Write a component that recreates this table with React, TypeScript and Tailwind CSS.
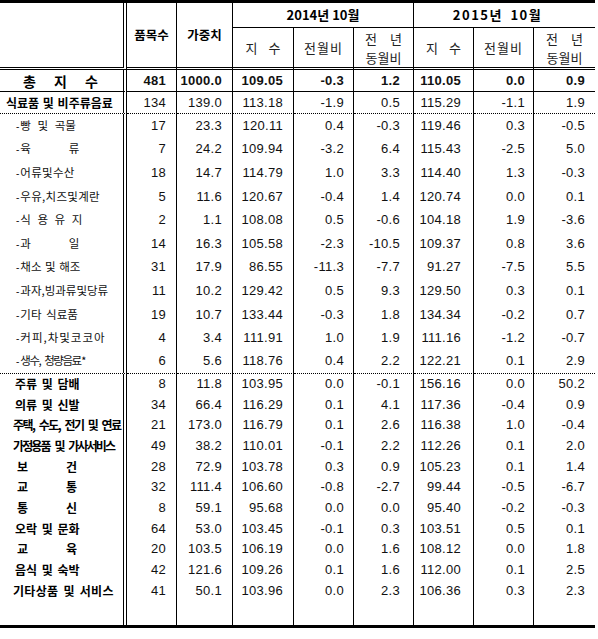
import React from "react";

type LabelDef = {
  kind: "total" | "cat" | "food" | "main";
  text: string;
  spread?: number;
  cls?: string;
  star?: boolean;
};

type RowDef = { label: LabelDef; v: string[] };

const rows: RowDef[] = [
  { label: { kind: "total", text: "총지수", spread: 75 }, v: ["481", "1000.0", "109.05", "-0.3", "1.2", "110.05", "0.0", "0.9"] },
  { label: { kind: "cat", text: "식료품 및 비주류음료" }, v: ["134", "139.0", "113.18", "-1.9", "0.5", "115.29", "-1.1", "1.9"] },
  { label: { kind: "food", text: "빵 및 곡물", cls: "[word-spacing:4px]" }, v: ["17", "23.3", "120.11", "0.4", "-0.3", "119.46", "0.3", "-0.5"] },
  { label: { kind: "food", text: "육류", spread: 59 }, v: ["7", "24.2", "109.94", "-3.2", "6.4", "115.43", "-2.5", "5.0"] },
  { label: { kind: "food", text: "어류및수산", cls: "tracking-[0.3px]" }, v: ["18", "14.7", "114.79", "1.0", "3.3", "114.40", "1.3", "-0.3"] },
  { label: { kind: "food", text: "우유,치즈및계란", cls: "tracking-[0.3px]" }, v: ["5", "11.6", "120.67", "-0.4", "1.4", "120.74", "0.0", "0.1"] },
  { label: { kind: "food", text: "식용유지", spread: 62 }, v: ["2", "1.1", "108.08", "0.5", "-0.6", "104.18", "1.9", "-3.6"] },
  { label: { kind: "food", text: "과일", spread: 59 }, v: ["14", "16.3", "105.58", "-2.3", "-10.5", "109.37", "0.8", "3.6"] },
  { label: { kind: "food", text: "채소 및 해조", cls: "[word-spacing:1px]" }, v: ["31", "17.9", "86.55", "-11.3", "-7.7", "91.27", "-7.5", "5.5"] },
  { label: { kind: "food", text: "과자,빙과류및당류", cls: "tracking-[0px]" }, v: ["11", "10.2", "129.42", "0.5", "9.3", "129.50", "0.3", "0.1"] },
  { label: { kind: "food", text: "기타 식료품", cls: "[word-spacing:2px]" }, v: ["19", "10.7", "133.44", "-0.3", "1.8", "134.34", "-0.2", "0.7"] },
  { label: { kind: "food", text: "커피,차및코코아", cls: "tracking-[1px]" }, v: ["4", "3.4", "111.91", "1.0", "1.9", "111.16", "-1.2", "-0.7"] },
  { label: { kind: "food", text: "생수, 청량음료", cls: "tracking-[-1.5px] [word-spacing:3px]", star: true }, v: ["6", "5.6", "118.76", "0.4", "2.2", "122.21", "0.1", "2.9"] },
  { label: { kind: "main", text: "주류 및 담배", cls: "[word-spacing:2px]" }, v: ["8", "11.8", "103.95", "0.0", "-0.1", "156.16", "0.0", "50.2"] },
  { label: { kind: "main", text: "의류 및 신발", cls: "[word-spacing:2px]" }, v: ["34", "66.4", "116.29", "0.1", "4.1", "117.36", "-0.4", "0.9"] },
  { label: { kind: "main", text: "주택, 수도, 전기 및 연료", cls: "tracking-[-1.5px] [word-spacing:3px] !pl-[13px]" }, v: ["21", "173.0", "116.79", "0.1", "2.6", "116.38", "1.0", "-0.4"] },
  { label: { kind: "main", text: "가정용품 및 가사서비스", cls: "tracking-[-1.9px] [word-spacing:4px] !pl-[13px]" }, v: ["49", "38.2", "110.01", "-0.1", "2.2", "112.26", "0.1", "2.0"] },
  { label: { kind: "main", text: "보건", spread: 60 }, v: ["28", "72.9", "103.78", "0.3", "0.9", "105.23", "0.1", "1.4"] },
  { label: { kind: "main", text: "교통", spread: 60 }, v: ["32", "111.4", "106.60", "-0.8", "-2.7", "99.44", "-0.5", "-6.7"] },
  { label: { kind: "main", text: "통신", spread: 60 }, v: ["8", "59.1", "95.68", "0.0", "0.0", "95.40", "-0.2", "-0.3"] },
  { label: { kind: "main", text: "오락 및 문화", cls: "[word-spacing:2px]" }, v: ["64", "53.0", "103.45", "-0.1", "0.3", "103.51", "0.5", "0.1"] },
  { label: { kind: "main", text: "교육", spread: 60 }, v: ["20", "103.5", "106.19", "0.0", "1.6", "108.12", "0.0", "1.8"] },
  { label: { kind: "main", text: "음식 및 숙박", cls: "[word-spacing:2px]" }, v: ["42", "121.6", "109.26", "0.1", "1.6", "112.00", "0.1", "2.5"] },
  { label: { kind: "main", text: "기타상품 및 서비스", cls: "tracking-[0.3px] [word-spacing:2px] !pl-[13px]" }, v: ["41", "50.1", "103.96", "0.0", "2.3", "106.36", "0.3", "2.3"] },
];

const kr = "font-['Noto_Sans_CJK_KR','Liberation_Sans',sans-serif]";
const num = "font-['Liberation_Sans','Noto_Sans_CJK_KR',sans-serif]";

const colPad = [
  "pr-[10px]",
  "pr-[10px]",
  "pr-[10px]",
  "pr-[9px]",
  "pr-[13px]",
  "pr-[12px]",
  "pr-[8px]",
  "pr-[10px]",
];
const colBorder = ["border-r", "border-r", "border-r", "border-r", "border-r", "border-r", "border-r", ""];

function Spread({ text, w }: { text: string; w: number }) {
  return (
    <span className="inline-flex justify-between" style={{ width: w }}>
      {Array.from(text).map((c, i) => (
        <span key={i}>{c}</span>
      ))}
    </span>
  );
}

function LabelCell({ l, bottom }: { l: LabelDef; bottom: string }) {
  const base = `border-black border-r-4 [border-right-style:double] ${bottom} ${kr} text-left align-middle leading-[14px] whitespace-nowrap overflow-hidden`;
  if (l.kind === "total") {
    return (
      <td className={`${base} pl-[23px] text-[14px] font-bold`}>
        <Spread text={l.text} w={l.spread!} />
      </td>
    );
  }
  if (l.kind === "cat") {
    return <td className={`${base} pl-[6px] text-[12px] font-bold tracking-[0px] [word-spacing:1px]`}>{l.text}</td>;
  }
  if (l.kind === "food") {
    return (
      <td className={`${base} pl-[16px] text-[11.5px] font-normal text-[#111]`}>
        <span className={`${num} mr-[1px] text-[10px]`}>-</span>
        {l.spread ? (
          <Spread text={l.text} w={l.spread} />
        ) : (
          <span className={`inline-block ${l.cls ?? ""}`}>{l.text}</span>
        )}
        {l.star && <sup className="text-[9px] font-bold ml-[1px] relative -top-[1px]">*</sup>}
      </td>
    );
  }
  return (
    <td className={`${base} pl-[15px] text-[12px] font-bold ${l.spread ? "!pl-[17px]" : ""} ${l.cls ?? ""}`}>
      {l.spread ? <Spread text={l.text} w={l.spread} /> : l.text}
    </td>
  );
}

function DataRow({ r, h, bottom, bold }: { r: RowDef; h: string; bottom: string; bold?: boolean }) {
  return (
    <tr className={h}>
      <LabelCell l={r.label} bottom={bottom} />
      {r.v.map((v, i) => (
        <td
          key={i}
          className={`border-black ${colBorder[i]} ${bottom} ${colPad[i]} ${num} text-right align-middle text-[13px] leading-[14px] tracking-[0.3px] whitespace-nowrap ${bold ? "font-bold" : "font-normal"} text-[#111]`}
        >
          {v}
        </td>
      ))}
    </tr>
  );
}

export default function App() {
  const dotted = "border-b [border-bottom-style:dotted]";
  return (
    <div className="w-[598px] h-[639px] bg-white text-black">
      <table className="table-fixed border-separate border-spacing-0 w-[595px] border-t-[3px] border-b-[3px] border-black">
        <colgroup>
          <col className="w-[127px]" />
          <col className="w-[50px]" />
          <col className="w-[56px]" />
          <col className="w-[61px]" />
          <col className="w-[60px]" />
          <col className="w-[60px]" />
          <col className="w-[60px]" />
          <col className="w-[60px]" />
          <col className="w-[61px]" />
        </colgroup>
        <thead>
          <tr className="h-[25px]">
            <th
              rowSpan={2}
              className="border-black border-r-4 [border-right-style:double] border-b-[3px] [border-bottom-style:double]"
            ></th>
            <th
              rowSpan={2}
              className={`border-black border-r border-b-[3px] [border-bottom-style:double] ${kr} text-[12.5px] font-bold text-center align-middle leading-[14px]`}
            >
              품목수
            </th>
            <th
              rowSpan={2}
              className={`border-black border-r border-b-[3px] [border-bottom-style:double] ${kr} text-[12.5px] font-bold text-center align-middle leading-[14px]`}
            >
              가중치
            </th>
            <th colSpan={3} className={`border-black border-r border-b ${kr} text-[13px] font-bold text-center align-middle leading-[14px]`}>
              2014년 10월
            </th>
            <th colSpan={3} className={`border-black border-b ${kr} text-[13px] font-bold text-center align-middle leading-[14px] tracking-[1.5px] [word-spacing:3px] pr-[14px]`}>
              2015년 10월
            </th>
          </tr>
          <tr className="h-[42px]">
            {[0, 1].map((g) => (
              <React.Fragment key={g}>
                <th className={`border-black border-r border-b-[3px] [border-bottom-style:double] ${kr} text-[13px] font-normal text-center align-middle leading-[14px] text-[#222]`}>
                  <span className="[word-spacing:8px]">지 수</span>
                </th>
                <th className={`border-black border-r border-b-[3px] [border-bottom-style:double] ${kr} text-[13px] font-normal text-center align-middle leading-[14px] tracking-[1px] text-[#222]`}>
                  전월비
                </th>
                <th
                  className={`border-black ${g === 0 ? "border-r" : ""} border-b-[3px] [border-bottom-style:double] ${kr} text-[13px] font-normal text-center align-middle leading-[19px] text-[#222]`}
                >
                  <div className="[word-spacing:10px]">전 년</div>
                  <div>동월비</div>
                </th>
              </React.Fragment>
            ))}
          </tr>
        </thead>
        <tbody>
          <DataRow r={rows[0]} h="h-[22px]" bottom="border-b" bold />
          <DataRow r={rows[1]} h="h-[22px]" bottom={dotted} />
          {rows.slice(2, 13).map((r, i) => (
            <DataRow key={i} r={r} h="h-[23.6px]" bottom={i === 10 ? dotted : ""} />
          ))}
          {rows.slice(13).map((r, i) => (
            <DataRow key={i} r={r} h="h-[20.7px]" bottom="" />
          ))}
          <tr className="h-[24px]">
            <td className="border-black border-r-4 [border-right-style:double]"></td>
            {colBorder.map((b, i) => (
              <td key={i} className={`border-black ${b}`}></td>
            ))}
          </tr>
        </tbody>
      </table>
    </div>
  );
}
